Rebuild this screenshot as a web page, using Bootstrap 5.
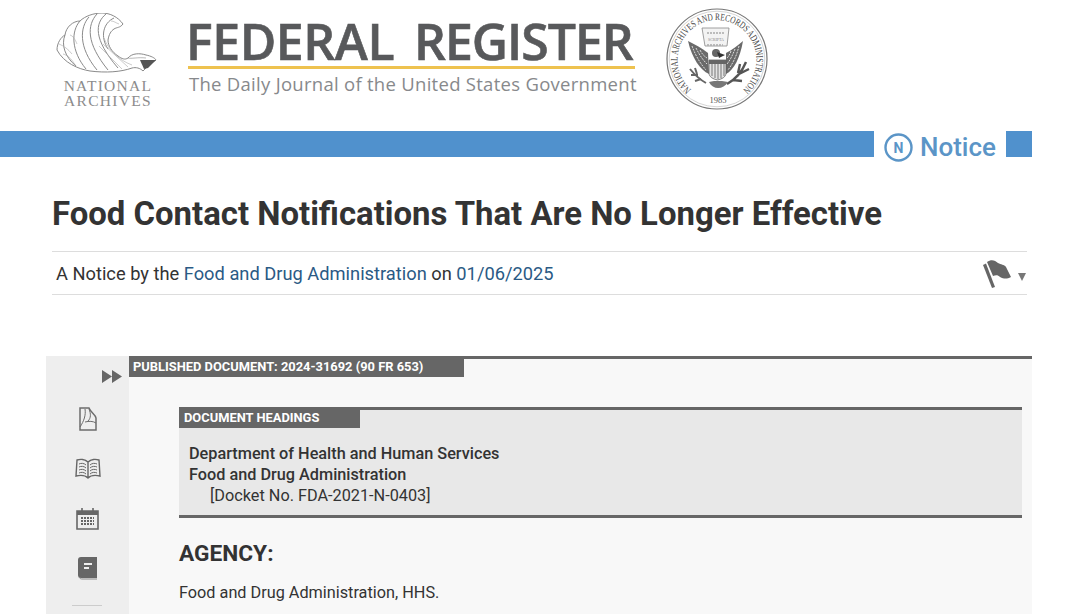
<!DOCTYPE html>
<html lang="en"><head><meta charset="utf-8"><title>Food Contact Notifications</title>
<link href="https://cdn.jsdelivr.net/npm/bootstrap@5.3.0/dist/css/bootstrap.min.css" rel="stylesheet">
<style>
html,body{height:614px;overflow:hidden}
body{font-family:Roboto,sans-serif;color:#333;background:#fff}
.site-head{height:131px;padding-left:56px}
.na-logo{width:102px;margin-top:13px}
.na-name{font:15.5px/15px "Liberation Serif",serif;letter-spacing:1.3px;color:#8c8c8c;text-align:center;margin-top:3px;padding-left:2px;white-space:nowrap}
.fr-logo{margin-left:30px;width:449px;margin-top:13px}
.fr-title{font:600 50px/56px "Open Sans",sans-serif;color:#58595b;white-space:nowrap;height:53px;margin-left:-2px;word-spacing:7px;-webkit-text-stroke:.6px #58595b}
.fr-w1{letter-spacing:-.45px}
.fr-w2{letter-spacing:-1.05px}
.fr-rule{height:3px;background:#eec24f;width:447px}
.fr-tag{font:18.5px/24px "Open Sans",sans-serif;color:#87898c;letter-spacing:.28px;white-space:nowrap;margin-top:3px;margin-left:1px}
.seal{margin-left:29px;margin-top:8px;width:102px;height:102px}
.type-bar{height:26px;width:1032px}
.type-fill{width:874px;background:#5091cd}
.type-end{width:26px;background:#5091cd}
.type-name{font-weight:500;font-size:26px;line-height:32px;color:#5b95c7;margin:0 10px 0 7px}
.doc-title{font-weight:700;font-size:32.9px;line-height:40px;color:#333;margin:37px 0 0 52px;white-space:nowrap}
.byline{margin:17px 0 0 52px;width:975px;height:44px;border-top:1px solid #ddd;border-bottom:1px solid #ddd;font-size:18.3px;padding:1px 1px 0 4px;color:#333}
.byline a{color:#2a5a85;text-decoration:none}
.tri{width:0;height:0;border-left:4.5px solid transparent;border-right:4.5px solid transparent;border-top:8px solid #777;margin:6px 0 0 6px}
.doc-wrap{margin:61px 0 0 46px;width:986px;height:260px}
.side-rail{width:83px;background:#eee;padding-top:14px}
.side-rail svg{display:block}
.rail-rule{width:30px;height:1px;background:#ccc;margin:25px 0 0 26px}
.doc-main{background:#f8f8f8;border-top:3px solid #666;flex:1}
.tab-label{background:#666;color:#fff;font-weight:700;font-size:12.88px;line-height:16px;height:18px;padding-left:4px;white-space:nowrap}
.tab-pub{width:335px}
.tab-head{width:181px;height:18px;padding-left:5px}
.head-box{margin:30px 10px 0 50px;background:#e8e8e8;border-top:3px solid #666;border-bottom:3px solid #666;height:111px;color:#333}
.head-lines{padding:15px 0 0 10px;font-size:16.26px;line-height:21px}
.head-lines b{font-weight:500;display:block}
.head-lines span{display:block;padding-left:21px}
.agency{margin:22px 0 0 50px;font-weight:700;font-size:22.7px;line-height:28px;color:#333}
.agency-txt{margin:14px 0 0 50px;font-size:16.26px;line-height:22px;color:#333}
.fl-svg{margin:0 0 0 2px}
.n-badge{margin:2px 0 0 10px}
</style></head><body>
<header class="site-head d-flex align-items-start">
 <div class="na-logo">
  <svg width="102" height="62" viewBox="0 0 102 62" class="d-block" fill="none" stroke="#8a8a8a" stroke-width="1">
   <path d="M1 37C1 30 5 24 9 22 10 14 17 8 24 8 29 3 38 0 46 0 54 0 62 4 67 11 64 15 61 14 58 16 55 18 53 21 52 27 52 33 56 39 62 43 66 46 69 47 72 45 76 40 84 40 90 42 95 43 99 45 100 47L94 51 87 58C84 55 80 54 76 55 65 59 50 60 34 58 22 56 8 50 1 37Z" fill="#fff"/>
   <path d="M9 22C5 32 9 44 20 53M24 8C15 18 15 38 30 56M33 4C24 14 22 34 41 57M41 1C31 12 30 30 52 57M50 1C39 10 37 26 62 55M58 5C47 10 44 24 52 36"/>
   <path d="M3 31C8 33 12 36 16 41M7 41C11 42 15 45 20 53M14 22C17 23 19 26 21 31M47 31 72 54M43 33 66 56M48 25C52 36 62 47 76 52M55 8C58 8 60 10 63 11" stroke-width=".6" stroke="#aaa"/>
   <path d="M72 45C75 46 82 44 90 45" stroke-width=".6"/>
   <path d="M84 47 100 47 92 55 88 56Z" fill="#555" stroke="none"/>
  </svg>
  <div class="na-name">NATIONAL<br>ARCHIVES</div>
 </div>
 <div class="fr-logo">
  <div class="fr-title"><span class="fr-w1">FEDERAL</span> <span class="fr-w2">REGISTER</span></div>
  <div class="fr-rule"></div>
  <div class="fr-tag">The Daily Journal of the United States Government</div>
 </div>
 <svg class="seal" viewBox="0 0 102 102">
  <defs><path id="ring" d="M25.300 81.600A39.500 39.500 0 1 1 76.700 81.600"/></defs>
  <circle cx="51" cy="51" r="50" fill="#fff" stroke="#777" stroke-width="1.200"/>
  <circle cx="51" cy="51" r="47.800" fill="none" stroke="#aaa" stroke-width=".5"/>
  <text font-family="Liberation Serif,serif" font-size="10" fill="#444"><textPath href="#ring" textLength="192" lengthAdjust="spacingAndGlyphs">NATIONAL ARCHIVES AND RECORDS ADMINISTRATION</textPath></text>
  <text x="52" y="95" text-anchor="middle" font-family="Liberation Serif,serif" font-size="8.500" fill="#555">1985</text>
  <path d="M36 20H63L61 38H39Z" fill="#f3f3f3" stroke="#888" stroke-width=".8"/>
  <text x="50" y="33" text-anchor="middle" font-family="Liberation Serif,serif" font-size="3.500" fill="#888" textLength="16" lengthAdjust="spacingAndGlyphs">SCRIPTA</text>
  <path d="M41 25H59M41 37H57" stroke="#aaa" stroke-width="1.500" stroke-dasharray="2 1"/>
  <path d="M22 33C28 36 36 40 42 45L43 66C34 62 26 50 22 33Z" fill="#6a6a6a"/>
  <path d="M77 33C72 37 66 42 60 45L60 66C68 62 74 50 77 33Z" fill="#6a6a6a"/>
  <path d="M26 38C29 46 33 54 40 62M30 40C33 46 36 51 41 56M34 42C36 46 38 48 41 50M73 38C71 46 68 54 62 62M69 41C67 46 65 51 61 56M65 43C64 46 63 48 61 50" stroke="#ddd" stroke-width="1" fill="none" stroke-dasharray="2 1"/>
  <circle cx="50" cy="45" r="4" fill="#666"/><path d="M51 44 59 47 53 50Z" fill="#333"/>
  <path d="M43 52H60V65C60 69 56 71 51.500 72 47 71 43 69 43 65Z" fill="#e4e4e4" stroke="#555" stroke-width=".7"/>
  <path d="M46 56V68M49 56V70M52 56V71M55 56V70M58 56V68" stroke="#777" stroke-width="1"/>
  <path d="M43 52H60V56H43Z" fill="#666"/>
  <path d="M24 61C28 66 33 71 40 75M25 67 32 67M29 73 35 71M29 60 31 66" stroke="#666" stroke-width="2" fill="none"/>
  <path d="M80 54C76 64 70 71 61 76M83 61 73 66M76 73 67 72M74 56 72 65" stroke="#555" stroke-width="2.400" fill="none"/>
  <path d="M43 74C47 82 57 82 62 74L56 73H48Z" fill="#777"/>
 </svg>
</header>
<div class="type-bar d-flex">
 <div class="type-fill"></div>
 <svg width="29" height="29" viewBox="0 0 29 29" class="n-badge flex-shrink-0"><circle cx="14.500" cy="14.500" r="13" fill="#fff" stroke="#5b95c7" stroke-width="2.400"/><text x="14.500" y="19.500" text-anchor="middle" font-family="Roboto,sans-serif" font-weight="700" font-size="14" fill="#5b95c7">N</text></svg>
 <div class="type-name">Notice</div>
 <div class="type-end"></div>
</div>
<h1 class="doc-title">Food Contact Notifications That Are No Longer Effective</h1>
<div class="byline d-flex align-items-center justify-content-between">
 <div>A Notice by the <a href="#">Food and Drug Administration</a> on <a href="#">01/06/2025</a></div>
 <div class="d-flex align-items-center">
  <svg width="30" height="30" viewBox="0 0 30 30" class="fl-svg"><path d="M1 6 4 4.500 13 28 10 29Z" fill="#666"/><path d="M5 3C9 0 13 1 16 4 19 6 22 5 24 8L29 18C25 20 22 20 18 18 16 16 14 16 11 17Z" fill="#666"/></svg>
  <div class="tri"></div>
 </div>
</div>
<div class="doc-wrap d-flex">
 <aside class="side-rail flex-shrink-0">
  <svg width="20" height="13" viewBox="0 0 20 13" style="margin:0 0 0 56px"><path d="M0 0 10 6.500 0 13ZM10 0 20 6.500 10 13Z" fill="#666"/></svg>
  <svg width="18" height="24" viewBox="0 0 18 24" style="margin:24px 0 0 33px" fill="none" stroke="#6c6c6c" stroke-width="1.500"><path d="M1 1H10C12 6 17 8 17 11V23H1Z"/><path d="M1 20C5 14 7 8 6 2M6 15C10 14 14 14 17 16M10 2C12 7 12 11 9 14" stroke-width="1"/></svg>
  <svg width="26" height="21" viewBox="0 0 26 21" style="margin:27px 0 0 29px" fill="none" stroke="#666" stroke-width="1.400"><path d="M13 4C10 1 5 1 2 2L1 18C5 17 10 17 13 20 16 17 21 17 25 18L24 2C21 1 16 1 13 4ZM13 4V20"/><path d="M4 6C6 5 9 5 11 7M4 9C6 8 9 8 11 10M4 12C6 11 9 11 11 13M4 15C6 14 9 14 11 16M15 7C17 5 20 5 22 6M15 10C17 8 20 8 22 9M15 13C17 11 20 11 22 12M15 16C17 14 20 14 22 15" stroke-width="1"/></svg>
  <svg width="23" height="22" viewBox="0 0 23 22" style="margin:29px 0 0 30px"><path d="M1 3H22V21H1Z" fill="#eee" stroke="#666" stroke-width="1.600"/><path d="M1 3H22V7H1Z" fill="#666"/><path d="M6 0V5M17 0V5" stroke="#666" stroke-width="1.600"/><path d="M5 10H18M5 13H18M5 16H18" stroke="#666" stroke-width="2" stroke-dasharray="2 1"/></svg>
  <svg width="19" height="23" viewBox="0 0 19 23" style="margin:27px 0 0 32px"><path d="M3 0H19V21H3C1 21 0 20 0 18V3C0 1 1 0 3 0Z" fill="#666"/><path d="M1 20C2 22 3 22 5 22H19" stroke="#888" fill="none"/><path d="M6 7H14M6 11H11" stroke="#eee" stroke-width="1.800"/></svg>
  <div class="rail-rule"></div>
 </aside>
 <main class="doc-main">
  <div class="tab-label tab-pub">PUBLISHED DOCUMENT: 2024-31692 (90 FR 653)</div>
  <section class="head-box">
   <div class="tab-label tab-head">DOCUMENT HEADINGS</div>
   <div class="head-lines"><b>Department of Health and Human Services</b><b>Food and Drug Administration</b><span>[Docket No. FDA-2021-N-0403]</span></div>
  </section>
  <h2 class="agency">AGENCY:</h2>
  <p class="agency-txt">Food and Drug Administration, HHS.</p>
 </main>
</div>
<script src="https://cdn.jsdelivr.net/npm/bootstrap@5.3.0/dist/js/bootstrap.bundle.min.js"></script>
</body></html>
